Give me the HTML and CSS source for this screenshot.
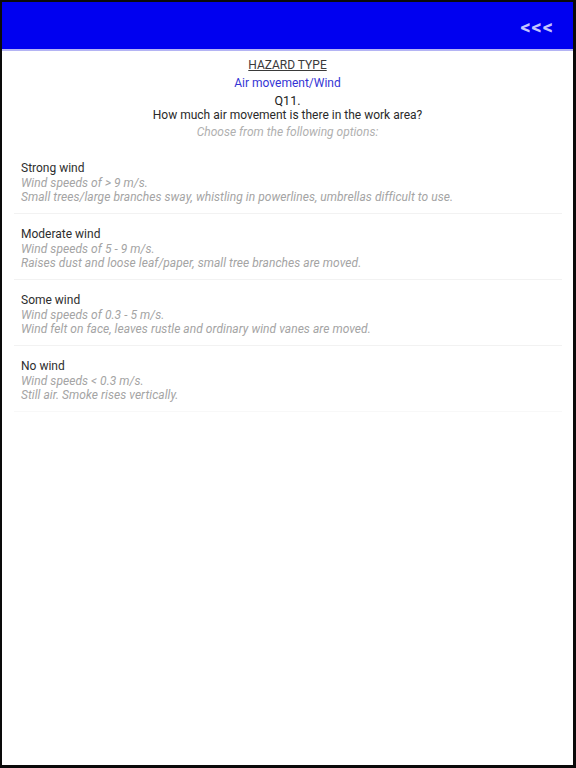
FILE: index.html
```html
<!DOCTYPE html>
<html>
<head>
<meta charset="utf-8">
<link rel="stylesheet" href="styles.css">
</head>
<body>
<div class="frame">
  <header class="bar">
    <span class="back">&lt;&lt;&lt;</span>
  </header>
  <main class="content">
    <div class="head">
      <div class="hazard">HAZARD TYPE</div>
      <div class="type">Air movement/Wind</div>
      <div class="qnum">Q11.</div>
      <div class="question">How much air movement is there in the work area?</div>
      <div class="hint">Choose from the following options:</div>
    </div>
    <ul class="options">
      <li class="option">
        <div class="title">Strong wind</div>
        <div class="desc">Wind speeds of &gt; 9 m/s.</div>
        <div class="desc">Small trees/large branches sway, whistling in powerlines, umbrellas difficult to use.</div>
      </li>
      <li class="option">
        <div class="title">Moderate wind</div>
        <div class="desc">Wind speeds of 5 - 9 m/s.</div>
        <div class="desc">Raises dust and loose leaf/paper, small tree branches are moved.</div>
      </li>
      <li class="option">
        <div class="title">Some wind</div>
        <div class="desc">Wind speeds of 0.3 - 5 m/s.</div>
        <div class="desc">Wind felt on face, leaves rustle and ordinary wind vanes are moved.</div>
      </li>
      <li class="option">
        <div class="title">No wind</div>
        <div class="desc">Wind speeds &lt; 0.3 m/s.</div>
        <div class="desc">Still air. Smoke rises vertically.</div>
      </li>
    </ul>
  </main>
</div>
</body>
</html>
```

FILE: styles.css
```css
html, body {
  margin: 0;
  padding: 0;
  background: #000;
}
body {
  font-family: Roboto, "Liberation Sans", Arial, sans-serif;
}
.frame {
  box-sizing: border-box;
  width: 576px;
  height: 768px;
  border-style: solid;
  border-color: #0a0a0a;
  border-width: 2px 3px 3px 2px;
  background: #fff;
  display: flex;
  flex-direction: column;
}
.bar {
  background: #0000f0;
  border-bottom: 2px solid #b4b4f4;
  display: flex;
  align-items: center;
  justify-content: flex-end;
  padding: 3px 19px 0 0;
  box-sizing: border-box;
  flex: none;
  height: 49px;
}
.back {
  color: #c4c4ff;
  font-weight: bold;
  font-size: 20px;
  letter-spacing: 1px;
}
.content {
  flex: 1;
}
.head {
  text-align: center;
  padding-top: 5px;
  font-size: 12px;
  color: #333;
}
.hazard {
  line-height: 18px;
  text-decoration: underline;
  color: #3a3a3a;
}
.type {
  line-height: 18px;
  color: #3434d4;
}
.qnum {
  margin-top: 2px;
  line-height: 14px;
  font-size: 12.5px;
  color: #222;
}
.question {
  line-height: 14px;
  color: #2a2a2a;
}
.hint {
  margin-top: 3px;
  line-height: 14px;
  font-style: italic;
  color: #b0b0b0;
  font-size: 12px;
}
.options {
  list-style: none;
  margin: 9px 11px 0 12px;
  padding: 0;
}
.option {
  padding: 12px 7px 9px 7px;
  border-bottom: 1px solid #f2f2f2;
}
.option:last-child {
  border-bottom-color: #f8f8f8;
}
.title {
  line-height: 16px;
  font-size: 12px;
  color: #2e2e2e;
}
.desc {
  line-height: 14px;
  font-size: 12px;
  letter-spacing: 0.05px;
  font-style: italic;
  color: #a4a4a4;
}
```
